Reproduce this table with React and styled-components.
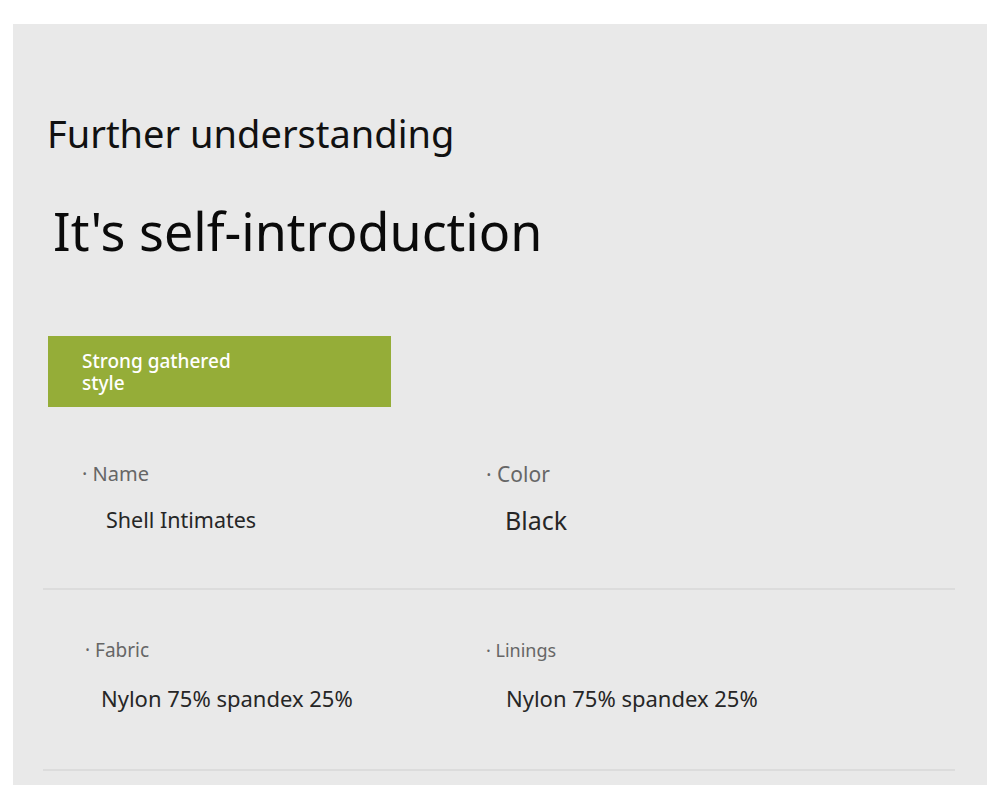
import styled, { createGlobalStyle } from "styled-components";

const GlobalStyle = createGlobalStyle`
  html, body {
    margin: 0;
    padding: 0;
    background: #ffffff;
  }
  body {
    font-family: "Noto Sans", "Open Sans", sans-serif;
  }
`;

const specs = [
  [
    { label: "Name", value: "Shell Intimates", labelIndent: 0, valueIndent: 24, valueSize: 21.5, labelSize: 20 },
    { label: "Color", value: "Black", labelIndent: 0, valueIndent: 19, valueSize: 25, labelSize: 21 },
  ],
  [
    { label: "Fabric", value: "Nylon 75% spandex 25%", labelIndent: 3, valueIndent: 19, valueSize: 22, labelSize: 19 },
    { label: "Linings", value: "Nylon 75% spandex 25%", labelIndent: 0, valueIndent: 20, valueSize: 22, labelSize: 18 },
  ],
];

const App = () => {
  return (
    <>
      <GlobalStyle />
      <Panel>
        <Eyebrow>Further understanding</Eyebrow>
        <Title>It's self-introduction</Title>
        <Tag>
          <TagText>Strong gathered style</TagText>
        </Tag>
        {specs.map((row, i) => (
          <SpecRow key={i} $first={i === 0}>
            {row.map((item) => (
              <SpecItem key={item.label} $gap={i === 0 ? 17 : 19}>
                <Label $indent={item.labelIndent} $size={item.labelSize}>
                  · {item.label}
                </Label>
                <Value $indent={item.valueIndent} $size={item.valueSize}>
                  {item.value}
                </Value>
              </SpecItem>
            ))}
          </SpecRow>
        ))}
      </Panel>
    </>
  );
};

const Panel = styled.div`
  margin: 24px 13px 0;
  padding: 86px 32px 30px 30px;
  background: #e9e9e9;
  display: flex;
  flex-direction: column;
`;

const Eyebrow = styled.h2`
  margin: 0;
  padding-left: 4px;
  font-size: 38px;
  line-height: 46px;
  font-weight: 400;
  color: #111;
`;

const Title = styled.h1`
  margin: 43px 0 0;
  padding-left: 10px;
  font-size: 52px;
  line-height: 64px;
  font-weight: 400;
  color: #0a0a0a;
`;

const Tag = styled.div`
  margin: 73px 0 0 5px;
  width: 343px;
  height: 71px;
  box-sizing: border-box;
  padding: 14px 34px;
  background: #95ad38;
`;

const TagText = styled.p`
  margin: 0;
  max-width: 170px;
  font-size: 19px;
  line-height: 22px;
  font-weight: 500;
  color: #ffffff;
`;

const SpecRow = styled.div`
  display: grid;
  grid-template-columns: 404px 1fr;
  padding: ${(p) => (p.$first ? "53px" : "46px")} 0 ${(p) => (p.$first ? "53px" : "56px")} 39px;
  border-bottom: 2px solid #dcdcdc;
`;

const SpecItem = styled.div`
  display: flex;
  flex-direction: column;
  gap: ${(p) => p.$gap}px;
`;

const Label = styled.span`
  padding-left: ${(p) => p.$indent}px;
  font-size: ${(p) => p.$size}px;
  line-height: 28px;
  color: #666;
`;

const Value = styled.span`
  padding-left: ${(p) => p.$indent}px;
  font-size: ${(p) => p.$size}px;
  line-height: 30px;
  color: #262626;
`;

export default App;
